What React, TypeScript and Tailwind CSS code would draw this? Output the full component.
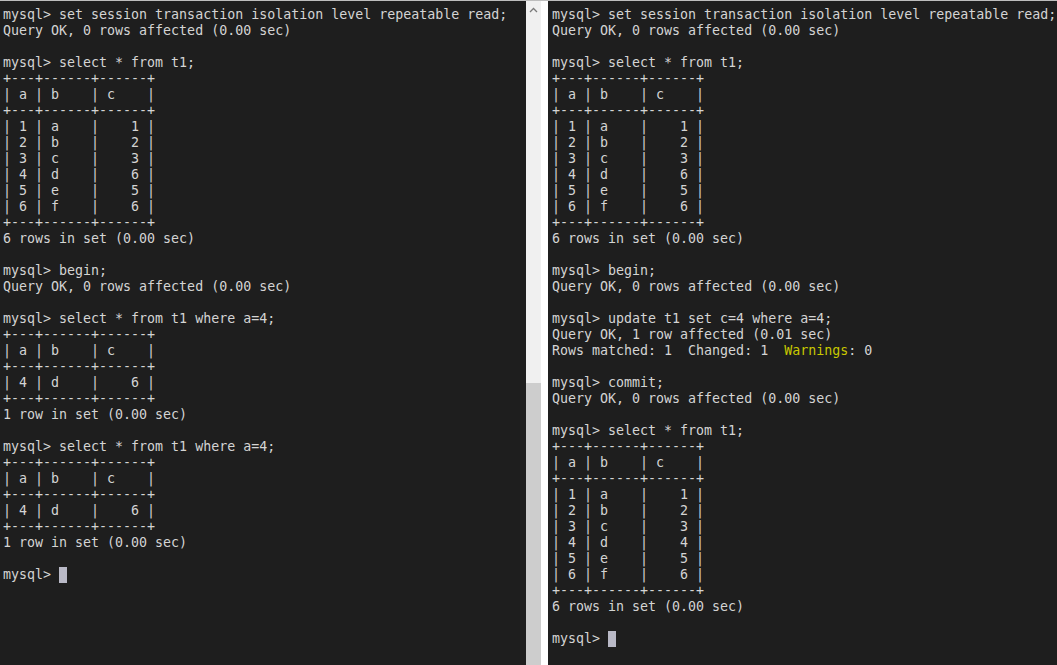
import type { ReactNode } from "react";

const BORDER = "+---+------+------+";
const HEADER = "| a | b    | c    |";

/** Rows of t1 as the mysql client prints them. */
function tableRows(rows: [number, string, number][]) {
  return rows.map(
    ([a, b, c]) => `| ${a} | ${b.padEnd(4)} | ${String(c).padStart(4)} |`,
  );
}

function table(rows: [number, string, number][]) {
  return [BORDER, HEADER, BORDER, ...tableRows(rows), BORDER];
}

const fullTable: [number, string, number][] = [
  [1, "a", 1],
  [2, "b", 2],
  [3, "c", 3],
  [4, "d", 6],
  [5, "e", 5],
  [6, "f", 6],
];

const updatedTable: [number, string, number][] = fullTable.map((row) =>
  row[0] === 4 ? [4, "d", 4] : row,
);

const intro = [
  "mysql> set session transaction isolation level repeatable read;",
  "Query OK, 0 rows affected (0.00 sec)",
  "",
  "mysql> select * from t1;",
  ...table(fullTable),
  "6 rows in set (0.00 sec)",
  "",
  "mysql> begin;",
  "Query OK, 0 rows affected (0.00 sec)",
  "",
];

const leftLines: ReactNode[] = [
  ...intro,
  "mysql> select * from t1 where a=4;",
  ...table([[4, "d", 6]]),
  "1 row in set (0.00 sec)",
  "",
  "mysql> select * from t1 where a=4;",
  ...table([[4, "d", 6]]),
  "1 row in set (0.00 sec)",
  "",
  <Prompt key="prompt" />,
];

const rightLines: ReactNode[] = [
  ...intro,
  "mysql> update t1 set c=4 where a=4;",
  "Query OK, 1 row affected (0.01 sec)",
  <span key="warn">
    Rows matched: 1  Changed: 1  <span className="text-[#c8c800]">Warnings</span>
    : 0
  </span>,
  "",
  "mysql> commit;",
  "Query OK, 0 rows affected (0.00 sec)",
  "",
  "mysql> select * from t1;",
  ...table(updatedTable),
  "6 rows in set (0.00 sec)",
  "",
  <Prompt key="prompt" />,
];

function Prompt() {
  return (
    <span>
      mysql&gt; <span className="inline-block h-4 w-2 bg-[#b9b9c6] align-top" />
    </span>
  );
}

function Terminal({ lines, className }: { lines: ReactNode[]; className?: string }) {
  return (
    <div
      className={`h-full overflow-hidden bg-[#1e1e1e] pt-[6px] font-['DejaVu_Sans_Mono',monospace] text-[13.3px] leading-4 text-[#d4d4d4] ${className ?? ""}`}
    >
      {lines.map((line, i) => (
        <div key={i} className="h-4 whitespace-pre">
          {line}
        </div>
      ))}
    </div>
  );
}

function Scrollbar() {
  return (
    <div className="flex h-full w-[15px] flex-col bg-[#f0f0f0]">
      <div className="flex h-[17px] items-center justify-center">
        <svg width="9" height="6" viewBox="0 0 9 6" aria-hidden>
          <path d="M1 5 L4.5 1.5 L8 5" fill="none" stroke="#7a7a7a" strokeWidth="1.3" />
        </svg>
      </div>
      <div className="flex-1" />
      <div className="h-[282px] bg-[#cdcdcd]" />
    </div>
  );
}

export default function App() {
  return (
    <div className="flex h-[665px] w-[1057px] overflow-hidden border-t border-[#bdbdbd] bg-white">
      <Terminal lines={leftLines} className="w-[526px] pl-[3px]" />
      <Scrollbar />
      <div className="w-[7px] bg-white" />
      <Terminal lines={rightLines} className="flex-1 pl-[4px]" />
    </div>
  );
}
